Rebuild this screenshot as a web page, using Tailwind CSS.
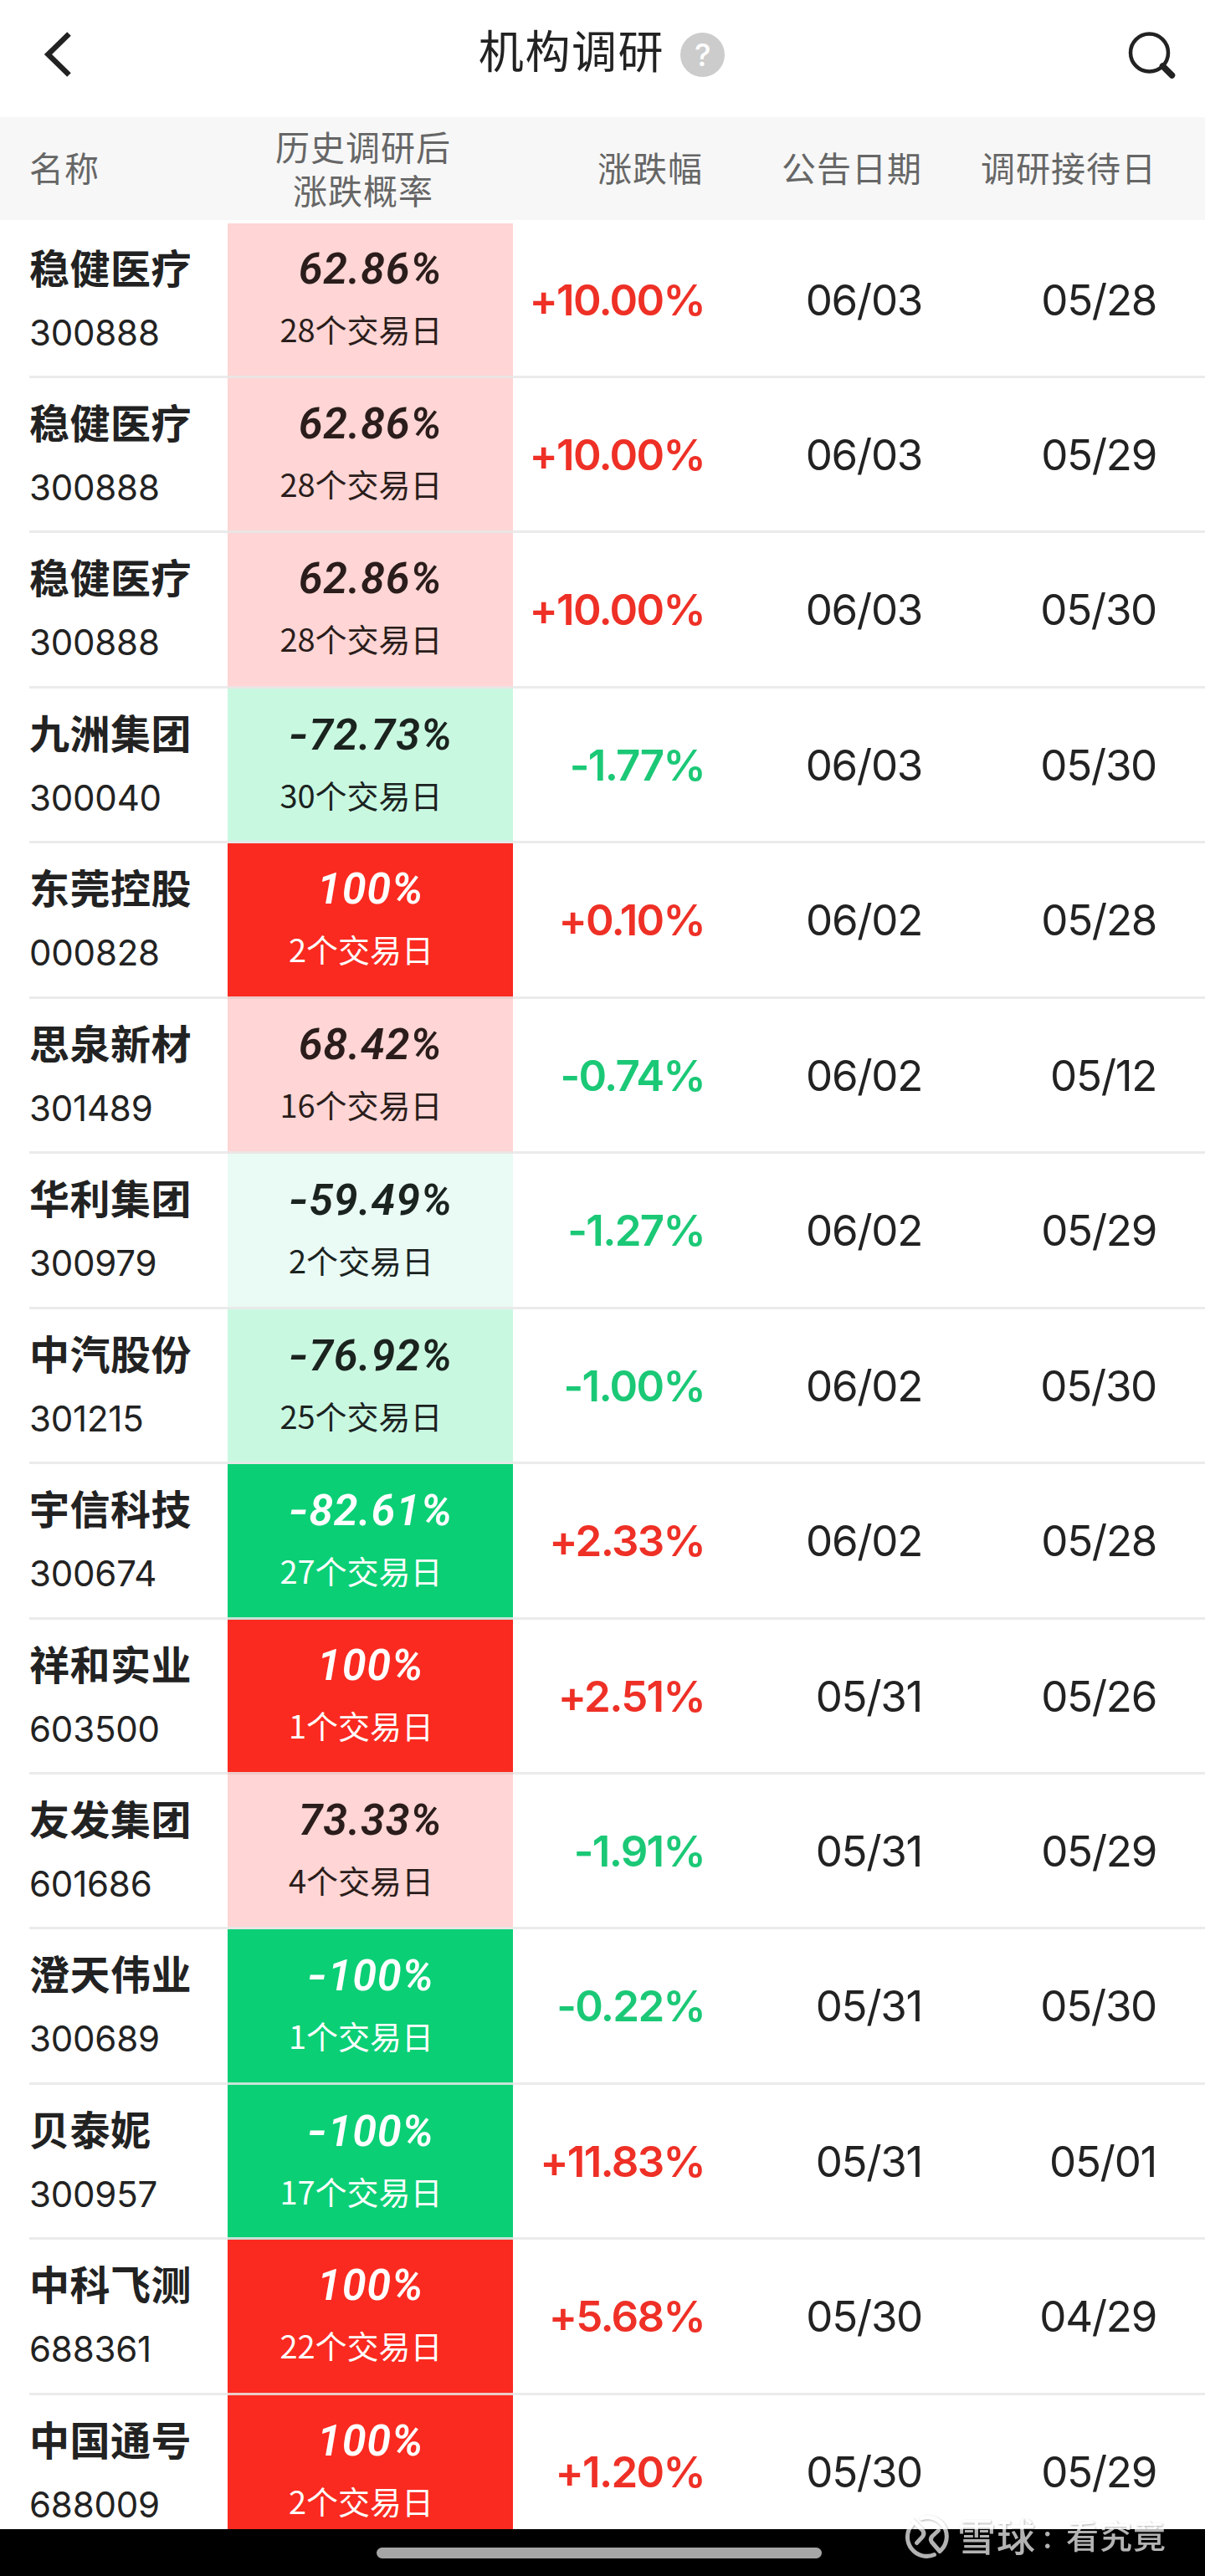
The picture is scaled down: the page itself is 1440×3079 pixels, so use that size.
<!DOCTYPE html>
<html lang="zh-CN">
<head>
<meta charset="utf-8">
<title>机构调研</title>
<script src="https://cdn.jsdelivr.net/npm/@tailwindcss/browser@4"></script>
</head>
<body class="bg-white">
<div class="relative flex h-[3079px] w-[1440px] flex-col overflow-hidden bg-white font-['Inter','Noto_Sans_CJK_SC',sans-serif] text-[#222]">
  <header class="flex h-[140px] shrink-0 items-start justify-between pt-[30px] pr-[32px] pl-[48px]">
    <svg class="h-[70px] w-[52px]" viewBox="0 0 52 70" fill="none" stroke="#222" stroke-width="6.5"><path d="M34.500 10.500L9.500 35L34.500 59.500"/></svg>
    <div class="flex h-[70px] items-center gap-[19px] pr-[8px]">
      <h1 class="-mt-[4px] text-[54px] leading-[70px] tracking-[1.600px]">机构调研</h1>
      <span class="flex size-[53px] items-center justify-center rounded-full bg-[#ccc] text-[37px] leading-none font-medium text-white">?</span>
    </div>
    <svg class="h-[70px] w-[62px]" viewBox="0 0 62 70" fill="none" stroke="#222"><circle cx="27.500" cy="33" r="22.500" stroke-width="4.500"/><path d="M43.500 49L54.500 60" stroke-width="7.500" stroke-linecap="round"/></svg>
  </header>
  <div class="grid h-[123px] shrink-0 grid-cols-[237px_341px_227px_262px_280px] items-center bg-[#f7f7f7] pl-[35px] text-[41px] leading-[52px] tracking-[1px] text-[#666]">
    <span>名称</span>
    <span class="-ml-[17px] pt-[2px] text-center">历史调研后<br>涨跌概率</span>
    <span class="text-right">涨跌幅</span>
    <span class="text-right">公告日期</span>
    <span class="text-right">调研接待日</span>
  </div>
  <main id="rows" class="h-[2760px] shrink-0 overflow-hidden pt-[3.500px]"></main>
  <footer class="flex h-[56px] shrink-0 justify-center bg-black pt-[22px] pr-[8px]">
    <div class="h-[13px] w-[532px] rounded-full bg-[#a6a6a6]"></div>
  </footer>
  <!-- Watermark: translucent white, with a soft shadow that shows over the white page -->
  <div class="absolute top-[3004px] left-[1082px] flex h-[56px] items-center text-white opacity-70 drop-shadow-[1px_1px_1px_rgba(0,0,0,0.45)]">
    <svg class="h-[56px] w-[54px]" viewBox="0 0 54 56" fill="none" stroke="currentColor" stroke-width="5" stroke-linecap="round" stroke-linejoin="round"><path d="M7.500 14A23 23 0 0 0 34.500 49.500"/><path d="M19 6A23 23 0 0 1 41 45.500L31.500 34.500Q29 31 32 27.500L39.500 20.500"/><path d="M9 9L20.500 20.500Q23.500 24 20.500 28L13.500 35.500"/></svg>
    <span class="ml-[8px] text-[46px] leading-[52px] font-medium tracking-[1px]">雪球</span>
    <span class="ml-[8px] w-[28px] text-[38px] leading-[56px] font-medium">:</span>
    <span class="text-[39px] leading-[52px] font-medium tracking-[1px]">看究竟</span>
  </div>
</div>
<script>
const data = [
  ['稳健医疗','300888','62.86%','28','+10.00%','06/03','05/28'],
  ['稳健医疗','300888','62.86%','28','+10.00%','06/03','05/29'],
  ['稳健医疗','300888','62.86%','28','+10.00%','06/03','05/30'],
  ['九洲集团','300040','-72.73%','30','-1.77%','06/03','05/30'],
  ['东莞控股','000828','100%','2','+0.10%','06/02','05/28'],
  ['思泉新材','301489','68.42%','16','-0.74%','06/02','05/12'],
  ['华利集团','300979','-59.49%','2','-1.27%','06/02','05/29'],
  ['中汽股份','301215','-76.92%','25','-1.00%','06/02','05/30'],
  ['宇信科技','300674','-82.61%','27','+2.33%','06/02','05/28'],
  ['祥和实业','603500','100%','1','+2.51%','05/31','05/26'],
  ['友发集团','601686','73.33%','4','-1.91%','05/31','05/29'],
  ['澄天伟业','300689','-100%','1','-0.22%','05/31','05/30'],
  ['贝泰妮','300957','-100%','17','+11.83%','05/31','05/01'],
  ['中科飞测','688361','100%','22','+5.68%','05/30','04/29'],
  ['中国通号','688009','100%','2','+1.20%','05/30','05/29'],
];
// Cell colour follows the strength and the sign of the probability.
function tone(p) {
  const v = parseFloat(p);
  if (v >= 80) return 'bg-[#fa2a20] text-white';
  if (v > 0) return 'bg-[#ffd5d5] text-[#2a1d1b]';
  if (v <= -80) return 'bg-[#0bcf75] text-white';
  if (v <= -60) return 'bg-[#c9f8e1] text-[#1b231f]';
  return 'bg-[#e9fbf4] text-[#1b231f]';
}
document.getElementById('rows').innerHTML = data.map(([name, code, prob, days, chg, pub, visit]) => `
  <div class="relative grid h-[185.460px] grid-cols-[272px_341px_229px_260px_280px]">
    <div class="flex flex-col pt-[25px] pl-[35px]">
      <span class="text-[48px] leading-[60px] font-bold tracking-[0.500px]">${name}</span>
      <span class="mt-[20px] text-[42px] leading-[52px] tracking-[-0.200px]">${code}</span>
    </div>
    <div class="flex flex-col items-center pt-[25px] ${tone(prob)}">
      <span class="font-['Roboto'] text-[52px] leading-[60px] font-semibold tracking-[0.800px] italic">${prob.replace('-', '<span class="font-[Inter]">-</span>')}</span>
      <span class="mt-[13px] pr-[22px] font-['Noto_Sans_CJK_SC',sans-serif] text-[38px] leading-[56px]">${days}个交易日</span>
    </div>
    <span class="text-right text-[51px] leading-[183px] font-semibold tracking-[-1.700px] ${chg[0] === '+' ? 'text-[#ee3026]' : 'text-[#1bc876]'}">${chg}</span>
    <span class="text-right text-[51px] leading-[183px] tracking-[-1.300px]">${pub}</span>
    <span class="text-right text-[51px] leading-[183px] tracking-[-1.300px]">${visit}</span>
    <div class="absolute right-0 bottom-0 left-[35px] h-[3px] bg-[#e8e8e8]/85"></div>
  </div>`).join('');
</script>
</body>
</html>
